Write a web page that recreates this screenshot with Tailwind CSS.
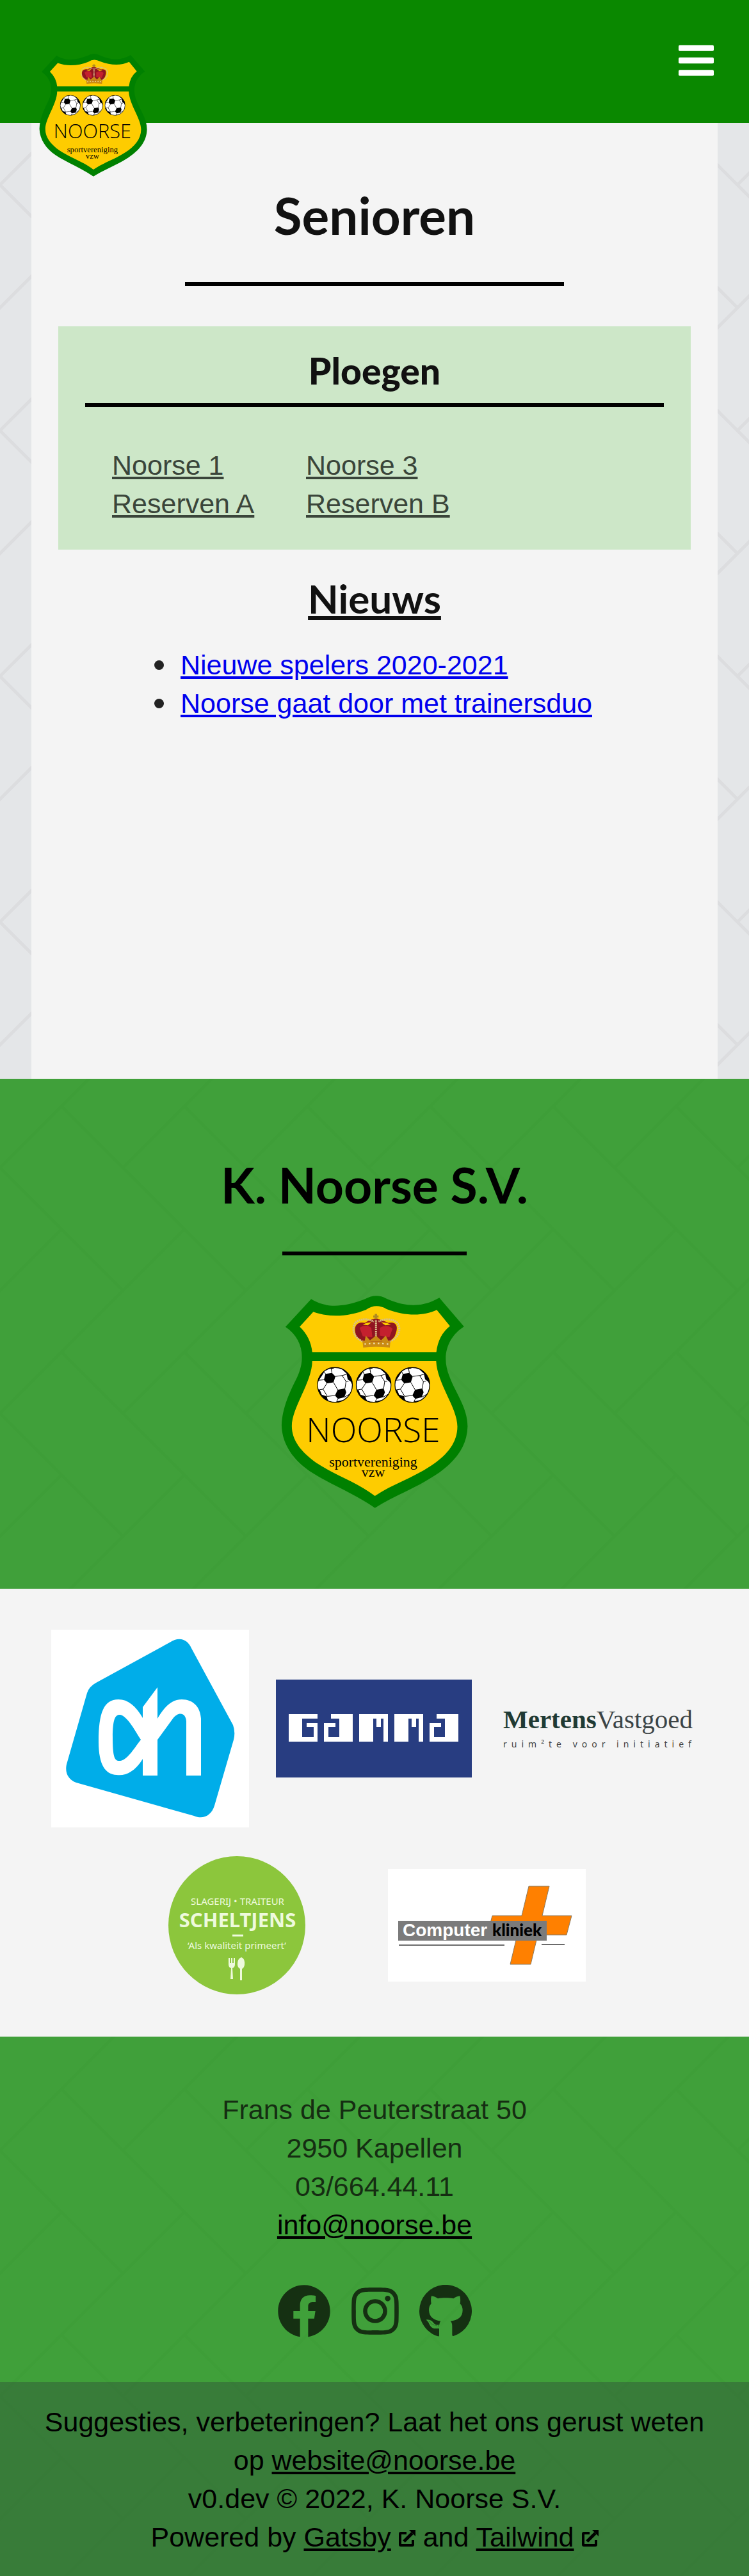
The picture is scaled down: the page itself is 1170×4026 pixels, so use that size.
<!DOCTYPE html>
<html lang="nl">
<head>
<meta charset="utf-8">
<meta name="viewport" content="width=device-width, initial-scale=1">
<title>Senioren | K. Noorse S.V.</title>
<script src="https://cdn.jsdelivr.net/npm/@tailwindcss/browser@4"></script>
</head>
<body class="bg-[#e4e6e8] font-['Liberation_Sans',Arial,sans-serif] text-[43px] leading-[60px] text-black">

<!-- Shared shapes -->
<svg class="absolute size-0" aria-hidden="true">
  <defs>
    <clipPath id="ballclip"><circle cx="84" cy="84" r="82"/></clipPath>
    <symbol id="ball" viewBox="0 0 168 168">
      <circle cx="84" cy="84" r="82" fill="#fff"/>
      <g clip-path="url(#ballclip)">
        <path d="M39 32 L70 28 L86 44 L77 72 L46 77 L32 60Z M97 107 L131 101 L137 119 L128 142 L98 150 L84 134Z M116 0 L168 30 V88 L158 68 L144 58 L138 30 L122 16Z M0 104 L12 106 L22 130 L46 138 L48 150 L60 168 H0Z M0 40 L20 20 L34 22 L22 42 L8 62 L0 80Z M52 0 H90 L74 8 L60 8Z M92 162 L120 156 L104 168 H88Z"/>
        <path fill="none" stroke="#000" stroke-width="3" d="M86 44 L118 40 L138 34 M118 40 L136 68 L131 101 M136 68 L148 66 M77 72 L97 107 M46 77 L28 104 L12 106 M28 104 L48 138 M84 134 L48 138 M70 28 L66 6 M32 60 L8 62 M39 32 L34 22 M128 142 L152 128 M98 150 L92 162"/>
      </g>
      <circle cx="84" cy="84" r="82" fill="none" stroke="#000" stroke-width="4"/>
    </symbol>
    <symbol id="crest" viewBox="117 74 876 1000">
      <path fill="#008000" d="M257 90 C330 135 410 128 510 90 Q562 60 612 88 C700 128 780 130 860 84 L976 219 C905 265 865 350 908 455 C935 530 993 600 993 690 C990 790 930 860 840 920 C750 980 650 1015 557 1073 C460 1005 350 965 250 900 C170 845 120 770 118 685 C120 600 160 520 190 460 C235 365 215 275 136 221Z"/>
      <path fill="#fecc00" d="M267 150 C350 180 440 170 515 140 Q562 108 612 137 C700 170 780 172 848 141 L910 217 Q855 260 846 340 H262 Q255 270 203 220Z M262 381 H845 C850 490 945 600 945 690 C945 770 890 830 820 875 C730 935 640 960 557 1017 C480 955 370 920 280 860 C210 810 166 755 166 688 C166 600 262 480 262 381Z"/>
      <path fill="#8f1420" d="M470 265 C450 210 480 195 510 202 C545 180 545 190 562 178 C580 190 585 185 620 202 C650 195 675 210 650 265 L628 292 H500Z"/>
      <path fill="#c4202e" d="M485 225 Q515 205 540 225 L545 270 L500 265Z M580 225 Q615 205 640 230 L625 270 L580 262Z"/>
      <path fill="#fecc00" d="M500 210 Q520 198 540 200 L524 213Z M586 200 Q610 198 632 210 L606 213Z"/>
      <path fill="none" stroke="#d9c08a" stroke-width="9" stroke-dasharray="7 3" d="M500 290 C450 270 445 215 472 195 Q510 175 552 196 M626 290 C680 270 682 215 655 195 Q615 175 574 196 M562 190 V275"/>
      <path fill="#c98b14" d="M498 285 Q562 300 630 285 L627 319 Q562 310 502 319Z M508 290 L514 262 L534 284 L562 262 L586 284 L608 262 L622 290Z"/>
      <path fill="none" stroke="#f0e0b0" stroke-width="7" stroke-dasharray="7 14" d="M508 302 Q562 296 624 302"/>
      <path fill="#b08a20" d="M556 160 h11 v7 h7 v10 h-7 v8 h-11 v-8 h-7 v-10 h7z"/>
      <use href="#ball" x="285" y="410" width="168" height="168"/>
      <use href="#ball" x="467" y="410" width="168" height="168"/>
      <use href="#ball" x="649" y="410" width="168" height="168"/>
      <text x="549" y="764" text-anchor="middle" class="font-['Open_Sans','Noto_Sans',sans-serif] text-[160px] font-light">NOORSE</text>
      <text x="549" y="877" text-anchor="middle" class="font-['Liberation_Serif',serif] text-[66px]">sportvereniging</text>
      <text x="549" y="927" text-anchor="middle" class="font-['Liberation_Serif',serif] text-[66px]">vzw</text>
    </symbol>
    <symbol id="external" viewBox="0 0 26 26">
      <path fill="none" stroke="currentColor" stroke-width="4" stroke-linejoin="round" d="M12 5 H3 Q2 5 2 6 V23 Q2 24 3 24 H21 Q22 24 22 23 V16"/>
      <path fill="none" stroke="currentColor" stroke-width="5" d="M8 18 L21 5"/>
      <path fill="currentColor" d="M16 0 H26 V10Z"/>
    </symbol>
    <pattern id="weave" y="193" width="192" height="384" patternUnits="userSpaceOnUse">
      <path fill="none" stroke="#dcdddf" stroke-width="5" d="M-4 100 L100 -4 M92 -4 L196 100 M-4 92 L100 196 M-4 292 L96 192 M92 188 L192 288 M92 388 L196 284 M188 92 L196 100"/>
    </pattern>
  </defs>
</svg>

<div class="relative isolate">
  <svg class="absolute inset-0 -z-10 h-full w-full" aria-hidden="true"><rect width="100%" height="100%" fill="url(#weave)"/></svg>

  <header class="relative flex h-48 items-center justify-end bg-[#0a8800] px-[55px] pb-[3px]">
    <a href="#" aria-label="K. Noorse S.V." class="absolute top-[84px] left-[61px]">
      <svg class="h-48 w-[169px]"><use href="#crest"/></svg>
    </a>
    <button type="button" aria-label="Menu" class="text-white">
      <svg class="h-[63px] w-[55px]" viewBox="0 0 448 512" fill="currentColor"><rect y="60" width="448" height="76" rx="16"/><rect y="218" width="448" height="76" rx="16"/><rect y="376" width="448" height="76" rx="16"/></svg>
    </button>
  </header>

  <main class="mx-[49px] min-h-[1494px] bg-[#f4f4f4] px-[42px] pt-[81px] text-[#222]">
    <h1 class="text-center font-['Lato',sans-serif] text-[80px] leading-[126px] font-bold text-[#111]">Senioren</h1>
    <hr class="mx-auto mt-[42px] w-3/5 border-t-6 border-black">
    <section class="mt-[63px] bg-[#cde7c8] px-[42px] pt-[39px] pb-[42px]">
      <h2 class="border-b-6 border-black pb-[21px] text-center font-['Lato',sans-serif] text-[57px] leading-[60px] font-black text-[#111]">Ploegen</h2>
      <ul class="mt-[61px] grid grid-cols-[repeat(3,303px)] pl-[42px] text-[#3a453a]">
        <li><a href="#" class="underline">Noorse 1</a></li>
        <li><a href="#" class="underline">Noorse 3</a></li>
        <li class="col-start-1"><a href="#" class="underline">Reserven A</a></li>
        <li><a href="#" class="underline">Reserven B</a></li>
      </ul>
    </section>
    <h2 class="mt-[40px] text-center font-['Lato',sans-serif] text-[62px] leading-[72px] font-bold text-[#111] underline">Nieuws</h2>
    <ul class="mt-[38px] pl-[150px]">
      <li class="flex items-center gap-[26px] before:size-[15px] before:rounded-full before:bg-[#222]"><a href="#" class="text-[#0000ee] underline">Nieuwe spelers 2020-2021</a></li>
      <li class="flex items-center gap-[26px] before:size-[15px] before:rounded-full before:bg-[#222]"><a href="#" class="text-[#0000ee] underline">Noorse gaat door met trainersduo</a></li>
    </ul>
  </main>

  <section class="flex flex-col items-center bg-[#0a8800]/75 pt-[102px] pb-[126px]">
    <h2 class="font-['Lato',sans-serif] text-[77px] leading-[126px] font-bold">K. Noorse S.V.</h2>
    <hr class="mt-[42px] w-72 border-t-6 border-black">
    <svg class="mt-[63px] h-[332px] w-[292px]" role="img" aria-label="K. Noorse S.V."><use href="#crest"/></svg>
  </section>

  <section aria-label="Sponsors" class="flex flex-wrap items-center justify-center gap-[42px] bg-[#f4f4f4] px-[57px] pt-[64px] pb-[63px]">
    <a href="#" aria-label="Albert Heijn" class="w-[309px]">
      <svg class="block w-full" viewBox="0 0 309 309">
        <rect width="309" height="309" fill="#fff"/>
        <path fill="#00ade9" d="M185 20 C200 10 213 15 219 29 L284 149 Q288 160 285 172 L255 275 C250 291 237 297 223 291 L39 239 C26 234 20 222 25 207 L56 99 Q59 89 70 83Z"/>
        <path fill="#fff" fill-rule="evenodd" d="M143 121 L166 90 V139 C178 118 190 109 204 109 C222 109 233 121 234 139 V228 H211 V143 C210 129 198 128 190 139 L166 172 V228 H143 V202 C130 223 115 229 102 227 C85 226 74 212 74 175 C74 130 82 109 105 109 C120 109 132 119 143 138Z M96 168 C96 200 99 206 108 205 C120 203 131 183 140 172 C132 160 120 136 108 133 C100 132 96 140 96 168Z"/>
      </svg>
    </a>
    <a href="#" aria-label="Gamma" class="w-[309px]">
      <svg class="block w-[306px]" viewBox="0 0 306 153">
        <rect width="306" height="153" fill="#283d81"/>
        <path fill="#fff" d="M20 54 H65 V61 H41 V90 H59 V74 H48 V68 H65 V97 H20Z"/>
        <path id="gamma-a" fill="#fff" fill-rule="evenodd" d="M86 54 H120 V97 H75 V68 H93 V74 H82 V90 H99 V61 H86Z"/>
        <path id="gamma-m" fill="#fff" d="M130 54 H175 V97 H168 V61 H164 V74 H157 V61 H152 V97 H130Z"/>
        <use href="#gamma-m" x="55"/>
        <use href="#gamma-a" x="165"/>
      </svg>
    </a>
    <a href="#" aria-label="Mertens Vastgoed" class="w-[309px]">
      <svg class="block w-full" viewBox="0 0 309 80">
        <text x="4" y="39" class="font-['Liberation_Serif',serif] text-[41px]" fill="#3c4446"><tspan class="font-bold" fill="#1f3a34">Mertens</tspan>Vastgoed</text>
        <text x="4" y="69" class="font-['Noto_Sans',sans-serif] text-[14px] tracking-[7px]" fill="#444">ruim²te voor initiatief</text>
      </svg>
    </a>
    <a href="#" aria-label="Scheltjens" class="w-[309px]">
      <svg class="block w-[222px]" viewBox="0 0 222 222">
        <ellipse cx="115" cy="111" rx="107" ry="108" fill="#8cc63c"/>
        <g fill="#eefadc" text-anchor="middle" class="font-['Noto_Sans',sans-serif]">
          <text x="116" y="79" class="text-[15px]">SLAGERIJ • TRAITEUR</text>
          <text x="116" y="114" class="text-[31px] font-bold">SCHELTJENS</text>
          <text x="115" y="148" class="text-[15px]">‘Als kwaliteit primeert’</text>
        </g>
        <path stroke="#eefadc" stroke-width="3" d="M108 127 H125"/>
        <path fill="#eefadc" d="M102 162 h2 v8 h2 v-8 h2 v8 h2 v-8 h2 v10 q0 5 -4 6 l1 17 h-4 l1 -17 q-4 -1 -4 -6z M122 161 q6 2 5 12 q-1 5 -4 6 v18 h-3 v-18 q-4 -2 -4 -7 q0 -9 6 -11z"/>
      </svg>
    </a>
    <a href="#" aria-label="Computerkliniek" class="w-[309px]">
      <svg class="block w-full" viewBox="0 0 309 176">
        <rect width="309" height="176" fill="#fff"/>
        <path fill="#ff8000" stroke="#8a7a60" stroke-width="1" d="M220 27 H252 L241 73 H287 L279 103 H234 L223 149 H191 L202 103 H155 L163 73 H209Z"/>
        <rect x="16" y="81" width="232" height="31" fill="#7b7b7b"/>
        <path stroke="#6b6b6b" stroke-width="2" d="M17 119 H182 M240 118 H276"/>
        <text x="23" y="105" fill="#fff" class="font-['Liberation_Sans',sans-serif] text-[28px] font-bold">Computer</text>
        <text x="163" y="105" class="font-['Lato',sans-serif] text-[26px] font-black">kliniek</text>
      </svg>
    </a>
  </section>

  <footer class="text-center">
    <div class="bg-[#0a8800]/75 pt-[84px] pb-[69px]">
      <address class="text-[#152d12] not-italic">
        Frans de Peuterstraat 50<br>2950 Kapellen<br>03/664.44.11<br>
        <a href="mailto:info@noorse.be" class="text-black underline">info@noorse.be</a>
      </address>
      <div class="mt-[63px] flex items-center justify-center gap-8 text-[#153012]">
        <a href="#" aria-label="Facebook"><svg class="size-[84px]" viewBox="0 0 512 512" fill="currentColor"><path d="M504 256C504 119 393 8 256 8S8 119 8 256c0 123.78 90.69 226.38 209.25 245V327.69h-63V256h63v-54.64c0-62.15 37-96.48 93.67-96.48 27.14 0 55.52 4.84 55.52 4.84v61h-31.28c-30.8 0-40.41 19.12-40.41 38.73V256h68.78l-11 71.69h-57.78V501C413.31 482.38 504 379.78 504 256z"/></svg></a>
        <a href="#" aria-label="Instagram"><svg class="h-[84px] w-[74px]" viewBox="0 0 448 512" fill="currentColor"><path d="M224.1 141c-63.6 0-114.9 51.3-114.9 114.9s51.3 114.9 114.9 114.9S339 319.5 339 255.9 287.7 141 224.1 141zm0 189.6c-41.1 0-74.7-33.5-74.7-74.7s33.5-74.7 74.7-74.7 74.7 33.5 74.7 74.7-33.6 74.7-74.7 74.7zm146.4-194.3c0 14.9-12 26.8-26.8 26.8-14.9 0-26.8-12-26.8-26.8s12-26.8 26.8-26.8 26.8 12 26.8 26.8zm76.1 27.2c-1.7-35.9-9.9-67.7-36.2-93.9-26.2-26.2-58-34.4-93.9-36.2-37-2.1-147.9-2.1-184.9 0-35.8 1.7-67.6 9.9-93.9 36.1s-34.4 58-36.2 93.9c-2.1 37-2.1 147.9 0 184.9 1.7 35.9 9.9 67.7 36.2 93.9s58 34.4 93.9 36.2c37 2.1 147.9 2.1 184.9 0 35.9-1.7 67.7-9.9 93.9-36.2 26.2-26.2 34.4-58 36.2-93.9 2.1-37 2.1-147.8 0-184.8zM398.8 388c-7.8 19.6-22.9 34.7-42.6 42.6-29.5 11.7-99.5 9-132.1 9s-102.7 2.6-132.1-9c-19.6-7.8-34.7-22.9-42.6-42.6-11.7-29.5-9-99.5-9-132.1s-2.6-102.7 9-132.1c7.8-19.6 22.9-34.7 42.6-42.6 29.5-11.7 99.5-9 132.1-9s102.7-2.6 132.1 9c19.6 7.8 34.7 22.9 42.6 42.6 11.7 29.5 9 99.5 9 132.1s2.7 102.7-9 132.1z"/></svg></a>
        <a href="#" aria-label="GitHub"><svg class="size-[82px]" viewBox="765 92 246 246" fill="currentColor"><path d="M858 330 Q858 334 852 333 C802 318 765 269 765 215 A123 123 0 1 1 925 332 Q919 333 919 327 V285 C919 275 917 267 911 262 C945 258 968 245 968 210 C968 198 964 188 956 180 C958 168 958 156 955 144 C945 145 934 150 925 156 C903 152 874 152 852 156 C842 150 832 145 822 144 C818 156 819 168 821 180 C813 188 810 198 810 210 C811 245 835 258 865 262 Q859 268 859 279 C845 281 838 278 830 268 C822 258 812 255 798 255 C798 260 804 262 808 268 C815 284 822 296 840 297 H858Z"/><path fill="none" stroke="currentColor" stroke-width="3" stroke-dasharray="3 5" d="M812 264 Q826 284 858 284"/></svg></a>
      </div>
    </div>
    <!-- The green runs on under the darker colophon -->
    <div class="bg-[#0a8800]/75">
      <div class="bg-[#292b38]/30 px-12 pt-8 pb-[31px]">
        <p>Suggesties, verbeteringen? Laat het ons gerust weten op <a href="mailto:website@noorse.be" class="underline">website@noorse.be</a></p>
        <p>v0.dev © 2022, K. Noorse S.V.</p>
        <p>Powered by <a href="#"><span class="underline">Gatsby</span> <svg class="inline-block size-[26px] align-baseline" aria-hidden="true"><use href="#external"/></svg></a> and <a href="#"><span class="underline">Tailwind</span> <svg class="inline-block size-[26px] align-baseline" aria-hidden="true"><use href="#external"/></svg></a></p>
      </div>
    </div>
  </footer>
</div>
</body>
</html>
